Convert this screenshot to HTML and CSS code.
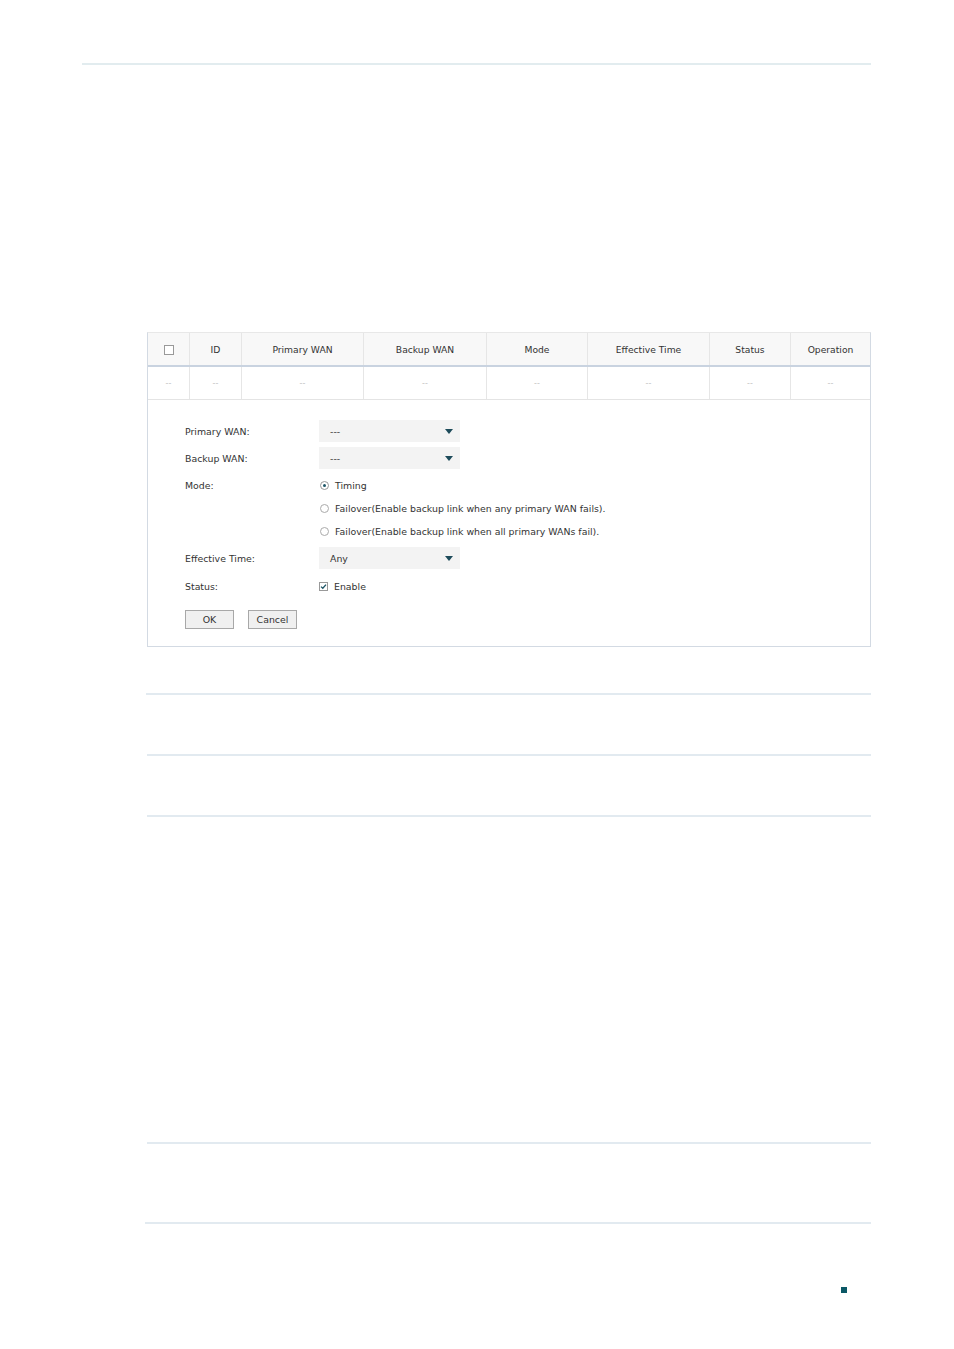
FILE: index.html
```html
<!DOCTYPE html>
<html lang="en">
<head>
    <meta charset="UTF-8">
    <meta name="viewport" content="width=device-width, initial-scale=1.0">
    <title>Link Backup</title>
    <link rel="stylesheet" href="styles.css">
</head>
<body>
    <div class="page">
        <hr class="top-rule">

        <div class="content">
            <div class="panel">
                <table class="grid">
                    <thead>
                        <tr>
                            <th class="col-check"><span class="box"></span></th>
                            <th class="col-id">ID</th>
                            <th class="col-wide">Primary WAN</th>
                            <th class="col-wide2">Backup WAN</th>
                            <th class="col-mode">Mode</th>
                            <th class="col-wide">Effective Time</th>
                            <th class="col-small">Status</th>
                            <th>Operation</th>
                        </tr>
                    </thead>
                    <tbody>
                        <tr>
                            <td>--</td>
                            <td>--</td>
                            <td>--</td>
                            <td>--</td>
                            <td>--</td>
                            <td>--</td>
                            <td>--</td>
                            <td>--</td>
                        </tr>
                    </tbody>
                </table>

                <form class="edit-form">
                    <div class="form-row row-select">
                        <label>Primary WAN:</label>
                        <div class="select"><span>---</span><i class="arrow"></i></div>
                    </div>
                    <div class="form-row row-select">
                        <label>Backup WAN:</label>
                        <div class="select"><span>---</span><i class="arrow"></i></div>
                    </div>
                    <div class="form-row row-radio first">
                        <label>Mode:</label>
                        <div class="option"><span class="radio checked"></span>Timing</div>
                    </div>
                    <div class="form-row row-radio">
                        <label></label>
                        <div class="option"><span class="radio"></span>Failover(Enable backup link when any primary WAN fails).</div>
                    </div>
                    <div class="form-row row-radio">
                        <label></label>
                        <div class="option"><span class="radio"></span>Failover(Enable backup link when all primary WANs fail).</div>
                    </div>
                    <div class="form-row row-select after-radio">
                        <label>Effective Time:</label>
                        <div class="select"><span>Any</span><i class="arrow"></i></div>
                    </div>
                    <div class="form-row row-check">
                        <label>Status:</label>
                        <div class="option"><span class="check">
                            <svg width="7" height="7" viewBox="0 0 7 7"><path d="M1 3.6 L2.8 5.3 L6 1.6" fill="none" stroke="#1d5566" stroke-width="1.3"/></svg>
                        </span>Enable</div>
                    </div>
                    <div class="buttons">
                        <button type="button" class="btn btn-ok">OK</button>
                        <button type="button" class="btn btn-cancel">Cancel</button>
                    </div>
                </form>
            </div>

            <hr class="rule rule-1">
            <hr class="rule rule-2">
            <hr class="rule rule-3">
            <hr class="rule rule-4">
            <hr class="rule rule-5">
        </div>

        <div class="footer">
            <span class="page-mark"></span>
        </div>
    </div>
</body>
</html>
```

FILE: styles.css
```css
body {
    margin: 0;
    padding: 0;
    background-color: #fff;
    font-family: "DejaVu Sans", Verdana, sans-serif;
    color: #333;
}

.page {
    width: 954px;
    height: 1349px;
    position: relative;
    overflow: hidden;
}

hr {
    border: none;
    margin: 0;
    height: 2px;
}

.top-rule {
    margin-top: 63px;
    margin-left: 82px;
    width: 789px;
    background-color: #e2ecef;
}

.content {
    margin-left: 147px;
    width: 724px;
    margin-top: 267px;
}

.panel {
    border: 1px solid #d3dae3;
    border-top-color: #e8e8e8;
    height: 315px;
    box-sizing: border-box;
}

.grid {
    width: 100%;
    border-collapse: collapse;
    table-layout: fixed;
    font-size: 9.2px;
}

.grid th {
    background-color: #f8f8f8;
    font-weight: normal;
    height: 32px;
    padding: 0;
    color: #333;
    border-right: 1px solid #e6e6e6;
    border-bottom: 2px solid #c9d3e0;
}

.grid td {
    height: 32px;
    padding: 0;
    text-align: center;
    color: #c4c4c4;
    font-size: 8px;
    border-right: 1px solid #e6e6e6;
    border-bottom: 1px solid #e4e4e4;
}

.grid th:last-child,
.grid td:last-child {
    border-right: none;
}

.col-check { width: 41px; }
.col-id { width: 51px; }
.col-wide { width: 121px; }
.col-wide2 { width: 122px; }
.col-mode { width: 100px; }
.col-small { width: 80px; }

.box {
    display: inline-block;
    width: 8px;
    height: 8px;
    border: 1px solid #999;
    background-color: #fff;
    vertical-align: middle;
}

.edit-form {
    padding: 20px 0 0 37px;
    font-size: 9.4px;
}

.form-row {
    display: flex;
    align-items: center;
}

.form-row label {
    width: 134px;
    flex-shrink: 0;
}

.row-select {
    height: 22px;
    margin-bottom: 5px;
}

.row-select.after-radio {
    margin-top: 4px;
}

.row-radio {
    height: 23px;
}

.row-radio.first {
    margin-top: 1px;
    height: 23px;
}

.row-check {
    margin-top: 6px;
    height: 22px;
}

.select {
    width: 141px;
    height: 22px;
    background-color: #f3f3f3;
    display: flex;
    align-items: center;
    justify-content: space-between;
    padding: 0 7px 0 11px;
    box-sizing: border-box;
}

.arrow {
    width: 0;
    height: 0;
    border-left: 4px solid transparent;
    border-right: 4px solid transparent;
    border-top: 5px solid #1d4b5a;
}

.option {
    display: flex;
    align-items: center;
}

.radio {
    width: 7px;
    height: 7px;
    border: 1px solid #aaa;
    border-radius: 50%;
    margin-left: 1px;
    margin-right: 6px;
    position: relative;
    background-color: #fff;
}

.radio.checked {
    border-color: #999;
}

.radio.checked::after {
    content: "";
    position: absolute;
    left: 2px;
    top: 2px;
    width: 3px;
    height: 3px;
    border-radius: 50%;
    background-color: #1d5566;
}

.check {
    width: 7px;
    height: 7px;
    border: 1px solid #999;
    margin-right: 6px;
    display: flex;
    align-items: center;
    justify-content: center;
    background-color: #fff;
}

.buttons {
    display: flex;
    gap: 14px;
    margin-top: 13px;
}

.btn {
    height: 19px;
    font-family: "DejaVu Sans", Verdana, sans-serif;
    font-size: 9.4px;
    color: #333;
    background-color: #f0f0f0;
    border: 1px solid #a8a8a8;
    border-radius: 0;
    padding: 0;
}

.btn-ok { width: 49px; }
.btn-cancel { width: 49px; }

.rule {
    background-color: #e2eaf0;
}

.rule-1 {
    margin-top: 46px;
    margin-left: -1px;
    width: 725px;
}

.rule-2 { margin-top: 59px; }
.rule-3 { margin-top: 59px; }
.rule-4 { margin-top: 325px; }

.rule-5 {
    margin-top: 78px;
    margin-left: -2px;
    width: 726px;
}

.footer {
    margin-top: 63px;
    margin-left: 841px;
}

.page-mark {
    display: block;
    width: 6px;
    height: 6px;
    background-color: #0b5866;
}
```
